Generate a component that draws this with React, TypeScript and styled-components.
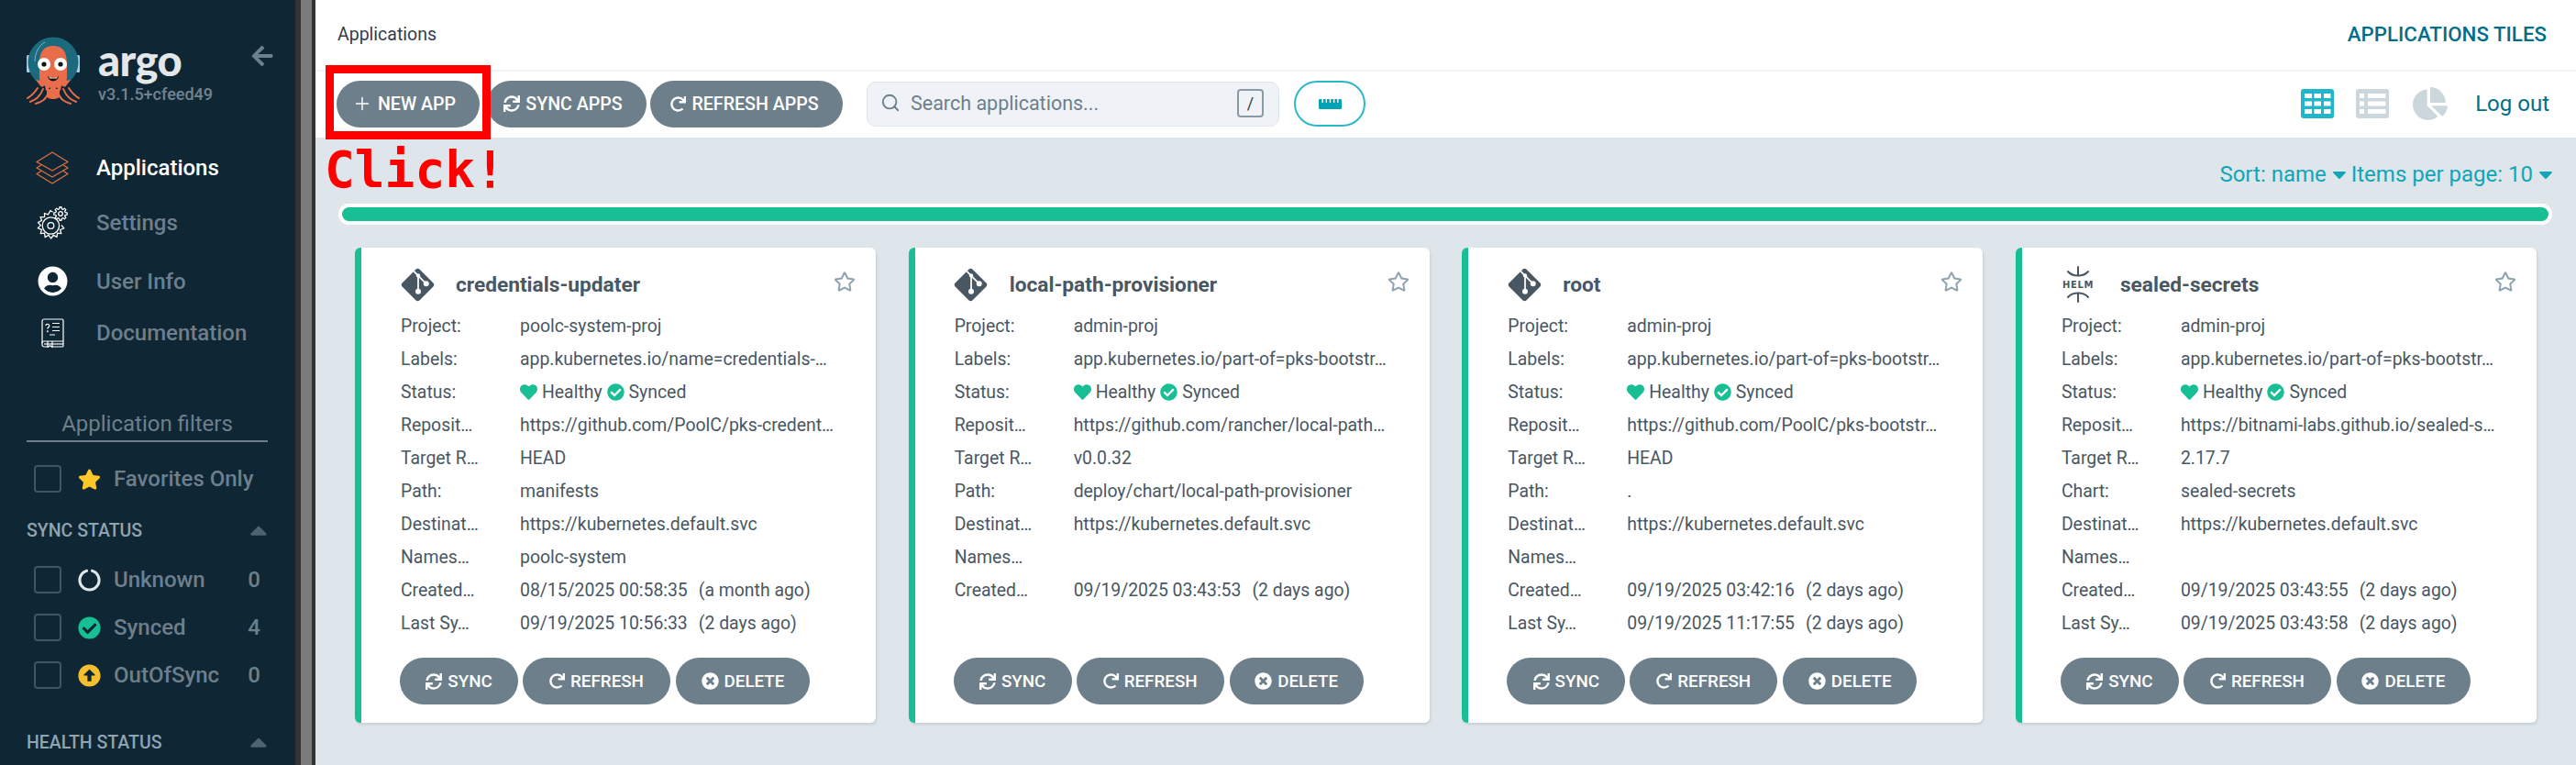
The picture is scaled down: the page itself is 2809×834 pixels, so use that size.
import React from "react";
import styled, { createGlobalStyle } from "styled-components";
import {
  FaArrowLeft, FaSync, FaRedo, FaTimesCircle, FaRegStar, FaStar, FaHeart, FaCheckCircle,
  FaUserCircle, FaArrowAltCircleUp, FaCircleNotch, FaChartPie, FaRulerHorizontal,
  FaCaretDown, FaCaretUp,
} from "react-icons/fa";
import { Plus, Search } from "lucide-react";

const Global = createGlobalStyle`
  html, body { margin: 0; padding: 0; height: 834px; overflow: hidden; background: #dee6eb; }
  * { box-sizing: border-box; }
  body { font-family: Roboto, "Liberation Sans", sans-serif; }
`;

const Page = styled.div`display: flex; width: 2809px; height: 834px; overflow: hidden;`;

const Sidebar = styled.aside`
  width: 322px; flex: none; height: 834px; overflow: hidden; background: #0f2634; color: #6d7f8b;
`;
const Brand = styled.div`display: flex; padding: 39px 23px 0 29px; height: 153px; align-items: flex-start;`;
const BrandText = styled.div`margin-left: 20px; display: flex; flex-direction: column;`;
const Wordmark = styled.div`
  font-family: Lato, sans-serif; font-weight: 900; font-size: 47px; line-height: 52px; color: #e3e7e9;
  height: 56px; letter-spacing: -0.6px;
`;
const Version = styled.div`font-size: 18px; line-height: 22px; color: #72838f; margin-top: -3px; font-weight: 500;`;
const BackButton = styled.div`margin-left: auto; margin-top: 9px; color: #6d7f8b; font-size: 26px; line-height: 0;`;

const NavItem = styled.div<{ $h: number; $active?: boolean }>`
  display: flex; align-items: center; height: ${p => p.$h}px; padding-left: 39px;
  font-size: 24px; font-weight: 500; color: ${p => (p.$active ? "#fff" : "#6d7f8b")};
`;
const NavIcon = styled.div`width: 36px; height: 36px; margin-right: 30px; display: flex; align-items: center; justify-content: center; color: #fff;`;

const FilterTitle = styled.div`
  margin: 58px 30px 0 29px; height: 38px; padding-top: 3px; text-align: center; font-size: 24px; font-weight: 400; line-height: 30px;
  color: #6d7f8b; border-bottom: 2px solid #6d7f8b;
`;
const FilterRow = styled.div<{ $top: number }>`
  display: flex; align-items: center; height: 30px; margin-top: ${p => p.$top}px; padding: 0 38px 0 37px;
  font-size: 24px; font-weight: 500; color: #6d7f8b;
`;
const Check = styled.span`width: 30px; height: 30px; border: 2px solid #3f5563; border-radius: 4px; flex: none; margin-right: 18px;`;
const FilterIcon = styled.span<{ $c: string }>`width: 25px; margin-right: 14px; display: flex; justify-content: center; color: ${p => p.$c}; font-size: 25px; line-height: 0;`;
const Count = styled.span`margin-left: auto;`;
const Section = styled.div<{ $top: number }>`
  display: flex; justify-content: space-between; align-items: center; margin: ${p => p.$top}px 30px 0 29px; height: 24px;
  font-size: 19.5px; font-weight: 500; color: #8fa4b1;
  svg { color: #4f6270; font-size: 30px; margin-right: -5px; }
`;

const ScrollTrack = styled.div`
  width: 22px; flex: none; background: #7b7b7b; border-left: 6px solid #333; border-right: 4px solid #333;
`;

const Main = styled.main`position: relative; flex: 1; min-width: 0; display: flex; flex-direction: column; background: #dee6eb;`;
const TopBar = styled.header`
  height: 78px; background: #fff; border-bottom: 2px solid #f0f3f5; display: flex; align-items: center; justify-content: space-between;
  padding: 0 32px 2px 24px;
`;
const Crumb = styled.div`font-size: 19.5px; color: #363c4a;`;
const PageTitle = styled.div`font-size: 22.3px; font-weight: 500; color: #006f8a;`;
const Toolbar = styled.div`height: 72px; background: #fff; display: flex; align-items: center; padding: 0 29px 2px 23px;`;
const PillButton = styled.button<{ $w: number; $gap?: number; $fs?: number; $pr?: number }>`
  width: ${p => p.$w}px; height: 51px; margin-left: ${p => p.$gap ?? 0}px; border: 0; border-radius: 26px; background: #6d7f8b; color: #fff;
  font-family: Roboto, sans-serif; font-size: ${p => p.$fs ?? 18.8}px; font-weight: 500; display: flex; align-items: center; justify-content: center; gap: 6px; flex: none;
  padding: 0 ${p => p.$pr ?? 0}px 0 0;
`;
const SearchBox = styled.div`
  width: 450px; height: 49px; margin-left: 26px; background: #eff3f7; border: 1px solid #dee6eb; border-radius: 10px;
  display: flex; align-items: center; padding: 0 16px 2px 14px; color: #6d7f8b; font-size: 21.5px; flex: none;
`;
const SearchText = styled.span`margin-left: 11px;`;
const KeyHint = styled.span`
  margin-left: auto; width: 29px; height: 31px; border: 2px solid #8b9ba6; border-radius: 4px; display: flex; align-items: center; justify-content: center;
  font-size: 18px; color: #363c4a;
`;
const FilterPill = styled.div`
  width: 78px; height: 50px; margin-left: 16px; border: 2px solid #2db7c9; border-radius: 25px; display: flex; align-items: center; justify-content: center;
  color: #00a2b3; font-size: 25px; flex: none;
`;
const ViewIcons = styled.div`margin-left: auto; display: flex; align-items: center;`;
const ViewIcon = styled.span<{ $c: string; $gap: number; $size: number }>`
  color: ${p => p.$c}; margin-left: ${p => p.$gap}px; font-size: ${p => p.$size}px; line-height: 0; display: flex;
`;
const LogOut = styled.span`font-size: 24px; color: #006f8a; margin-left: 30px;`;

const Content = styled.div`flex: 1; padding: 0 26px 0 25px;`;
const SortRow = styled.div`
  height: 72px; padding-top: 26px; display: flex; justify-content: flex-end; align-items: flex-start; font-size: 24px; line-height: 28px; color: #10a5b7;
  margin-right: -5px;
  svg { font-size: 24px; margin: 2px 0 0 2px; }
`;
const SortText = styled.span`margin-left: 1px;`;
const Progress = styled.div`height: 23px; border: 4px solid #fff; border-radius: 12px; background: #18be94;`;
const Grid = styled.div`
  display: grid; grid-template-columns: repeat(4, 1fr); column-gap: 35.5px; margin: 25px 17px 0 18px;
`;
const Card = styled.article`
  background: #fff; border-left: 7px solid #18be94; border-radius: 6px; padding: 22px 20px 20px 43px; display: flex; flex-direction: column;
  box-shadow: 1px 2px 3px rgba(0, 0, 0, 0.1); color: #495763; height: 518px;
`;
const CardHead = styled.div`display: flex; align-items: center; height: 36px; margin-bottom: 9px;`;
const KindIcon = styled.div<{ $gap: number }>`width: 38px; height: 38px; flex: none; display: flex; align-items: center; justify-content: center; margin-right: ${p => p.$gap}px; color: #495763; margin-left: -1px;`;
const Title = styled.h2`font-size: 22.7px; font-weight: 700; margin: 0; color: #495763;`;
const Fav = styled.span`margin-left: auto; margin-right: 2px; font-size: 24px; line-height: 0; color: #8fa4b1; margin-top: -6px;`;
const Row = styled.div`display: flex; align-items: center; height: 36px; font-size: 19.4px; white-space: pre;`;
const Label = styled.div`width: 130px; flex: none;`;
const Value = styled.div`display: flex; align-items: center;`;
const Ago = styled.span`margin-left: 12px;`;
const StatusIcon = styled.span`color: #18be94; font-size: 19px; line-height: 0; margin-right: 5px;`;
const StatusText = styled.span`margin-right: 5px;`;
const Actions = styled.div`margin-top: auto; display: flex; margin-left: -1px;`;

const Annotation = styled.div`
  position: absolute; left: 11px; top: 71px; width: 180px; height: 81px; border: 9px solid #ff0000; pointer-events: none;
`;
const ClickLabel = styled.div`
  position: absolute; left: 10px; top: 152px; font-family: "DejaVu Sans Mono", monospace; font-weight: 700; font-size: 54.5px; line-height: 66px; color: #ff0000;
`;

const ArgoLogo = () => (
  <svg width="58" height="75" viewBox="0 0 58 75" style={{ flex: "none" }}>
    <rect x="0" y="21" width="4" height="19" rx="1.5" fill="#a8cfe6" />
    <rect x="54" y="21" width="4" height="19" rx="1.5" fill="#a8cfe6" />
    <circle cx="29" cy="29" r="27.5" fill="#1b6a7d" />
    <path d="M9 28C9 18 14 10 20 7" fill="none" stroke="#7fb4c1" strokeWidth="1" />
    <path d="M14 30C14 16 20 11 29 11S44 16 44 30V44C44 50 42 54 41 56L38 54L37 60L32 56V64H26V56L21 60L20 54L17 56C16 54 14 50 14 44Z" fill="#e96d4b" />
    <path d="M12 57C6 66 2 67 1 68 M18 58C14 68 8 70 4 72 M24 60C22 70 16 72 10 74 M34 60C36 70 42 72 48 74 M40 58C44 68 50 70 54 72 M46 57C52 66 56 67 57 68" fill="none" stroke="#e96d4b" strokeWidth="2" strokeLinecap="round" />
    <path d="M22 58H36V66C36 70 22 70 22 66Z" fill="#e96d4b" />
    <path d="M10 48L20 50L16 56Z M48 48L38 50L42 56Z" fill="#e96d4b" />
    <circle cx="19" cy="31" r="7" fill="#fff" />
    <circle cx="37" cy="31" r="7" fill="#fff" />
    <circle cx="19" cy="31" r="2.6" fill="#111" />
    <circle cx="37" cy="31" r="2.6" fill="#111" />
    <path d="M23 44C26 47 32 47 35 44C34 51 24 51 23 44Z" fill="#111" />
    <path d="M24.5 45C27 46.4 31 46.4 33.5 45L33 46.4H25Z" fill="#fff" />
  </svg>
);

const LayersIcon = () => (
  <svg width="36" height="36" viewBox="0 0 36 36" fill="none" stroke="#d96f43" strokeWidth="1.4" strokeLinejoin="round">
    <path d="M18 1L35 11.5L18 21L1 11.5Z" />
    <path d="M6 15L1 18L18 28L35 18L30 15" />
    <path d="M6 21.5L1 24.5L18 35L35 24.5L30 21.5" />
  </svg>
);

const gearPath = (cx: number, cy: number, r: number, teeth: number, depth: number) => {
  const pts: string[] = [];
  const step = (Math.PI * 2) / teeth;
  for (let i = 0; i < teeth; i++) {
    const a = i * step;
    [[-0.32, r], [-0.18, r + depth], [0.18, r + depth], [0.32, r]].forEach(([o, rad]) => {
      const t = a + o * step;
      pts.push(`${(cx + Math.cos(t) * rad).toFixed(2)} ${(cy + Math.sin(t) * rad).toFixed(2)}`);
    });
  }
  return `M${pts.join("L")}Z`;
};

const GearsIcon = () => (
  <svg width="36" height="36" viewBox="0 0 36 36" fill="none" stroke="#fff" strokeWidth="1.3" strokeLinejoin="round">
    <path d="M18.5 6.2L16 4.5L13.5 8.8L9.5 7.5L9.6 11.6L5 11.6L6.6 15.4L2.5 17.5L5.4 20.6L2.2 23.6L6.4 25.4L5.2 29.6L9.5 29.2L10.2 33.6L14 31.3L16.6 35L19.2 31.4L23 33.4L23.6 29.2L27.8 29.6L26.6 25.5L30.8 23.8L28 20.5" />
    <circle cx="16.4" cy="21" r="9.2" />
    <circle cx="16.4" cy="21" r="3.4" />
    <path d={gearPath(27, 8, 5.4, 8, 1.9)} />
    <circle cx="27" cy="8" r="2.3" />
  </svg>
);

const BookIcon = () => (
  <svg width="25" height="32" viewBox="0 0 25 32" fill="none" stroke="#fff" strokeWidth="1.2">
    <path d="M3 1H22.5C23.3 1 24 1.7 24 2.5V30C24 30.6 23.5 31 23 31H12" />
    <path d="M7 31H3C1.9 31 1 30.1 1 29V3C1 1.9 1.9 1 3 1" />
    <path d="M1 27C1 25.9 1.9 25 3 25H24" />
    <path d="M3 28H24" />
    <path d="M7 25V31.5L9.5 29.8L12 31.5V25" />
    <path d="M4.8 8C5 5.8 8.8 5.8 8.8 8.2C8.8 9.8 6.8 9.8 6.8 11.6" />
    <circle cx="6.8" cy="14.2" r="0.4" />
    <path d="M12 5.5H20M12 9.5H20M12 13.5H20M9 18H15" />
  </svg>
);

const GitIcon = () => (
  <svg width="37" height="37" viewBox="0 0 36 36">
    <rect x="5" y="5" width="26" height="26" rx="3" transform="rotate(45 18 18)" fill="#495763" />
    <path d="M13.8 3.6L18.5 8.3V25M18.5 8.3L27 16.8" fill="none" stroke="#fff" strokeWidth="1.7" />
    <circle cx="18.5" cy="8.3" r="2.1" fill="#fff" />
    <circle cx="18.5" cy="25" r="2.9" fill="#fff" />
    <circle cx="27" cy="16.8" r="2.9" fill="#fff" />
  </svg>
);

const HelmIcon = () => (
  <svg width="36" height="40" viewBox="0 0 36 40" fill="none" stroke="#495763" strokeWidth="2" strokeLinecap="round">
    <path d="M7 6C12 12 24 12 29 6" />
    <path d="M18 1V10" />
    <text x="18" y="24.2" textAnchor="middle" stroke="none" fill="#495763" fontFamily="'DejaVu Sans', sans-serif" fontWeight="700" fontSize="10" letterSpacing="0.6">HELM</text>
    <path d="M7 34C12 28 24 28 29 34" />
    <path d="M18 30V39" />
  </svg>
);

const GridViewIcon = () => (
  <svg width="36" height="32" viewBox="0 0 36 32">
    <path fillRule="evenodd" fill="#21b7cb" d="M3 0H33A3 3 0 0 1 36 3V29A3 3 0 0 1 33 32H3A3 3 0 0 1 0 29V3A3 3 0 0 1 3 0ZM4 5V10H12V5ZM14.5 5V10H22V5ZM25 5V10H32.5V5ZM4 13.5V18.5H12V13.5ZM14.5 13.5V18.5H22V13.5ZM25 13.5V18.5H32.5V13.5ZM4 22V27H12V22ZM14.5 22V27H22V22ZM25 22V27H32.5V22Z" />
  </svg>
);

const ListViewIcon = () => (
  <svg width="36" height="32" viewBox="0 0 36 32">
    <path fillRule="evenodd" fill="#ccd6dd" d="M3 0H33A3 3 0 0 1 36 3V29A3 3 0 0 1 33 32H3A3 3 0 0 1 0 29V3A3 3 0 0 1 3 0ZM4 5V10H9V5ZM13 5V10H32.5V5ZM4 13.5V18.5H9V13.5ZM13 13.5V18.5H32.5V13.5ZM4 22V27H9V22ZM13 22V27H32.5V22Z" />
  </svg>
);

type CardData = {
  name: string; kind: "git" | "helm"; project: string; labels: string; repo: string; rev: string;
  pathLabel: string; path: string; ns: string; created: [string, string]; synced?: [string, string];
};

const DEST = "https://kubernetes.default.svc";
const cards: CardData[] = [
  { name: "credentials-updater", kind: "git", project: "poolc-system-proj", labels: "app.kubernetes.io/name=credentials-…", repo: "https://github.com/PoolC/pks-credent…", rev: "HEAD", pathLabel: "Path:", path: "manifests", ns: "poolc-system", created: ["08/15/2025 00:58:35", "(a month ago)"], synced: ["09/19/2025 10:56:33", "(2 days ago)"] },
  { name: "local-path-provisioner", kind: "git", project: "admin-proj", labels: "app.kubernetes.io/part-of=pks-bootstr…", repo: "https://github.com/rancher/local-path…", rev: "v0.0.32", pathLabel: "Path:", path: "deploy/chart/local-path-provisioner", ns: "", created: ["09/19/2025 03:43:53", "(2 days ago)"] },
  { name: "root", kind: "git", project: "admin-proj", labels: "app.kubernetes.io/part-of=pks-bootstr…", repo: "https://github.com/PoolC/pks-bootstr…", rev: "HEAD", pathLabel: "Path:", path: ".", ns: "", created: ["09/19/2025 03:42:16", "(2 days ago)"], synced: ["09/19/2025 11:17:55", "(2 days ago)"] },
  { name: "sealed-secrets", kind: "helm", project: "admin-proj", labels: "app.kubernetes.io/part-of=pks-bootstr…", repo: "https://bitnami-labs.github.io/sealed-s…", rev: "2.17.7", pathLabel: "Chart:", path: "sealed-secrets", ns: "", created: ["09/19/2025 03:43:55", "(2 days ago)"], synced: ["09/19/2025 03:43:58", "(2 days ago)"] },
];

const AppCard = ({ c }: { c: CardData }) => (
  <Card>
    <CardHead>
      <KindIcon $gap={c.kind === "git" ? 23 : 27}>{c.kind === "git" ? <GitIcon /> : <HelmIcon />}</KindIcon>
      <Title>{c.name}</Title>
      <Fav><FaRegStar /></Fav>
    </CardHead>
    <Row><Label>Project:</Label><Value>{c.project}</Value></Row>
    <Row><Label>Labels:</Label><Value>{c.labels}</Value></Row>
    <Row>
      <Label>Status:</Label>
      <Value>
        <StatusIcon><FaHeart /></StatusIcon><StatusText>Healthy</StatusText>
        <StatusIcon><FaCheckCircle /></StatusIcon><StatusText>Synced</StatusText>
      </Value>
    </Row>
    <Row><Label>Reposit…</Label><Value>{c.repo}</Value></Row>
    <Row><Label>Target R…</Label><Value>{c.rev}</Value></Row>
    <Row><Label>{c.pathLabel}</Label><Value>{c.path}</Value></Row>
    <Row><Label>Destinat…</Label><Value>{DEST}</Value></Row>
    <Row><Label>Names…</Label><Value>{c.ns}</Value></Row>
    <Row><Label>Created…</Label><Value>{c.created[0]}<Ago>{c.created[1]}</Ago></Value></Row>
    {c.synced && <Row><Label>Last Sy…</Label><Value>{c.synced[0]}<Ago>{c.synced[1]}</Ago></Value></Row>}
    <Actions>
      <PillButton $w={129}><FaSync size={18} /> SYNC</PillButton>
      <PillButton $w={161} $gap={5}><FaRedo size={17} /> REFRESH</PillButton>
      <PillButton $w={146} $gap={6}><FaTimesCircle size={19} /> DELETE</PillButton>
    </Actions>
  </Card>
);

export default function App() {
  return (
    <Page>
      <Global />
      <Sidebar>
        <Brand>
          <ArgoLogo />
          <BrandText>
            <Wordmark>argo</Wordmark>
            <Version>v3.1.5+cfeed49</Version>
          </BrandText>
          <BackButton><FaArrowLeft /></BackButton>
        </Brand>
        <NavItem $h={60} $active><NavIcon><LayersIcon /></NavIcon>Applications</NavItem>
        <NavItem $h={60}><NavIcon><GearsIcon /></NavIcon>Settings</NavItem>
        <NavItem $h={67}><NavIcon><FaUserCircle size={33} /></NavIcon>User Info</NavItem>
        <NavItem $h={46}><NavIcon><BookIcon /></NavIcon>Documentation</NavItem>
        <FilterTitle>Application filters</FilterTitle>
        <FilterRow $top={25}>
          <Check /><FilterIcon $c="#ffc62a"><FaStar /></FilterIcon>Favorites Only
        </FilterRow>
        <Section $top={29}>SYNC STATUS<FaCaretUp /></Section>
        <FilterRow $top={27}>
          <Check /><FilterIcon $c="#dee6eb"><FaCircleNotch /></FilterIcon>Unknown<Count>0</Count>
        </FilterRow>
        <FilterRow $top={22}>
          <Check /><FilterIcon $c="#18be94"><FaCheckCircle /></FilterIcon>Synced<Count>4</Count>
        </FilterRow>
        <FilterRow $top={22}>
          <Check /><FilterIcon $c="#f4c030"><FaArrowAltCircleUp /></FilterIcon>OutOfSync<Count>0</Count>
        </FilterRow>
        <Section $top={46}>HEALTH STATUS<FaCaretUp /></Section>
      </Sidebar>
      <ScrollTrack />
      <Main>
        <TopBar>
          <Crumb>Applications</Crumb>
          <PageTitle>APPLICATIONS TILES</PageTitle>
        </TopBar>
        <Toolbar>
          <PillButton $w={156} $fs={19.6} $pr={9}><Plus size={22} strokeWidth={1.6} /> NEW APP</PillButton>
          <PillButton $w={174} $gap={8} $fs={19.6} $pr={8}><FaSync size={18} /> SYNC APPS</PillButton>
          <PillButton $w={210} $gap={4} $fs={19.6} $pr={4}><FaRedo size={17} /> REFRESH APPS</PillButton>
          <SearchBox>
            <Search size={22} strokeWidth={2} />
            <SearchText>Search applications...</SearchText>
            <KeyHint>/</KeyHint>
          </SearchBox>
          <FilterPill><FaRulerHorizontal /></FilterPill>
          <ViewIcons>
            <ViewIcon $c="#21b7cb" $gap={0} $size={38}><GridViewIcon /></ViewIcon>
            <ViewIcon $c="#ccd6dd" $gap={24} $size={38}><ListViewIcon /></ViewIcon>
            <ViewIcon $c="#ccd6dd" $gap={26} $size={38}><FaChartPie /></ViewIcon>
          </ViewIcons>
          <LogOut>Log out</LogOut>
        </Toolbar>
        <Content>
          <SortRow>
            <SortText>Sort: name</SortText><FaCaretDown />
            <SortText>Items per page: 10</SortText><FaCaretDown />
          </SortRow>
          <Progress />
          <Grid>
            {cards.map(c => <AppCard key={c.name} c={c} />)}
          </Grid>
        </Content>
        <Annotation />
        <ClickLabel>Click!</ClickLabel>
      </Main>
    </Page>
  );
}
